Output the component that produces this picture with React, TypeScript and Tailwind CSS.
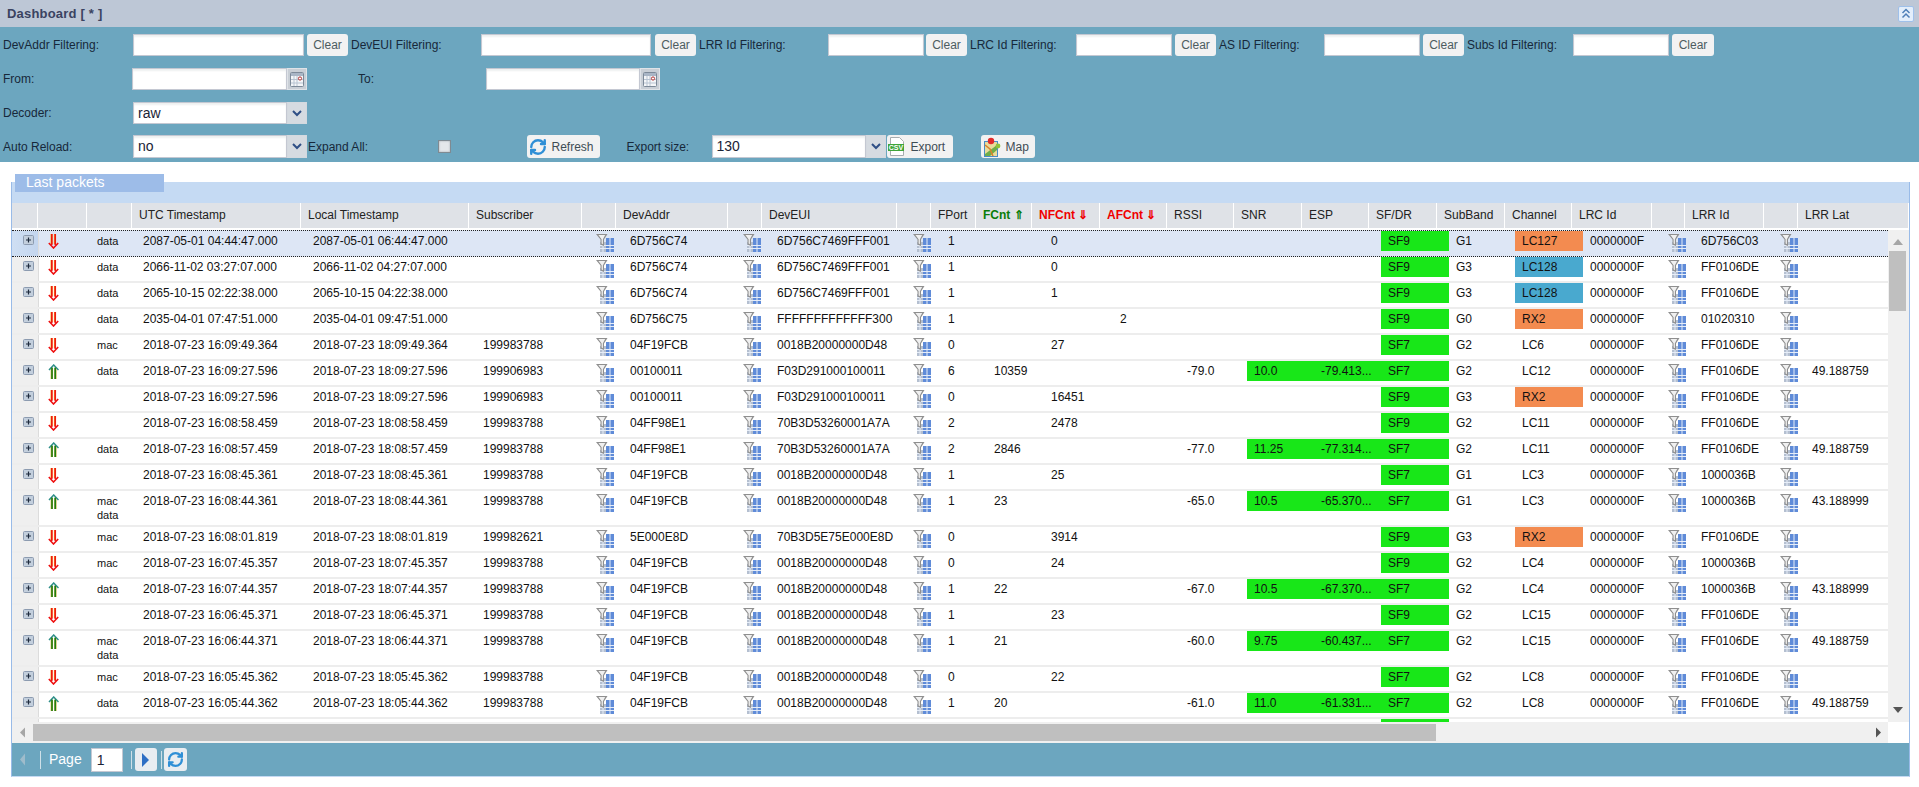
import { RefreshCw } from "lucide-react";

type Row = {
  dir: "up" | "down";
  type?: string[];
  utc?: string;
  local?: string;
  subs?: string;
  addr?: string;
  eui?: string;
  port?: string;
  f?: string;
  nf?: string;
  af?: string;
  rssi?: string;
  snr?: string;
  esp?: string;
  sf: string;
  band?: string;
  chan?: string;
  chanBg?: "orange" | "blue";
  lrr?: string;
  lat?: string;
};

const M1 = { addr: "6D756C74", eui: "6D756C7469FFF001" };
const A = { subs: "199983788", addr: "04F19FCB", eui: "0018B20000000D48" };
const B = { subs: "199906983", addr: "00100011", eui: "F03D291000100011" };
const C = { subs: "199983788", addr: "04FF98E1", eui: "70B3D53260001A7A" };
const GW1 = "FF0106DE";
const GW2 = "1000036B";

const rows: Row[] = [
  { dir: "down", type: ["data"], utc: "2087-05-01 04:44:47.000", local: "2087-05-01 06:44:47.000", ...M1, port: "1", nf: "0", sf: "SF9", band: "G1", chan: "LC127", chanBg: "orange", lrr: "6D756C03" },
  { dir: "down", type: ["data"], utc: "2066-11-02 03:27:07.000", local: "2066-11-02 04:27:07.000", ...M1, port: "1", nf: "0", sf: "SF9", band: "G3", chan: "LC128", chanBg: "blue", lrr: GW1 },
  { dir: "down", type: ["data"], utc: "2065-10-15 02:22:38.000", local: "2065-10-15 04:22:38.000", ...M1, port: "1", nf: "1", sf: "SF9", band: "G3", chan: "LC128", chanBg: "blue", lrr: GW1 },
  { dir: "down", type: ["data"], utc: "2035-04-01 07:47:51.000", local: "2035-04-01 09:47:51.000", addr: "6D756C75", eui: "FFFFFFFFFFFFF300", port: "1", af: "2", sf: "SF9", band: "G0", chan: "RX2", chanBg: "orange", lrr: "01020310" },
  { dir: "down", type: ["mac"], utc: "2018-07-23 16:09:49.364", local: "2018-07-23 18:09:49.364", ...A, port: "0", nf: "27", sf: "SF7", band: "G2", chan: "LC6", lrr: GW1 },
  { dir: "up", type: ["data"], utc: "2018-07-23 16:09:27.596", local: "2018-07-23 18:09:27.596", ...B, port: "6", f: "10359", rssi: "-79.0", snr: "10.0", esp: "-79.413...", sf: "SF7", band: "G2", chan: "LC12", lrr: GW1, lat: "49.188759" },
  { dir: "down", utc: "2018-07-23 16:09:27.596", local: "2018-07-23 18:09:27.596", ...B, port: "0", nf: "16451", sf: "SF9", band: "G3", chan: "RX2", chanBg: "orange", lrr: GW1 },
  { dir: "down", utc: "2018-07-23 16:08:58.459", local: "2018-07-23 18:08:58.459", ...C, port: "2", nf: "2478", sf: "SF9", band: "G2", chan: "LC11", lrr: GW1 },
  { dir: "up", type: ["data"], utc: "2018-07-23 16:08:57.459", local: "2018-07-23 18:08:57.459", ...C, port: "2", f: "2846", rssi: "-77.0", snr: "11.25", esp: "-77.314...", sf: "SF7", band: "G2", chan: "LC11", lrr: GW1, lat: "49.188759" },
  { dir: "down", utc: "2018-07-23 16:08:45.361", local: "2018-07-23 18:08:45.361", ...A, port: "1", nf: "25", sf: "SF7", band: "G1", chan: "LC3", lrr: GW2 },
  { dir: "up", type: ["mac", "data"], utc: "2018-07-23 16:08:44.361", local: "2018-07-23 18:08:44.361", ...A, port: "1", f: "23", rssi: "-65.0", snr: "10.5", esp: "-65.370...", sf: "SF7", band: "G1", chan: "LC3", lrr: GW2, lat: "43.188999" },
  { dir: "down", type: ["mac"], utc: "2018-07-23 16:08:01.819", local: "2018-07-23 18:08:01.819", subs: "199982621", addr: "5E000E8D", eui: "70B3D5E75E000E8D", port: "0", nf: "3914", sf: "SF9", band: "G3", chan: "RX2", chanBg: "orange", lrr: GW1 },
  { dir: "down", type: ["mac"], utc: "2018-07-23 16:07:45.357", local: "2018-07-23 18:07:45.357", ...A, port: "0", nf: "24", sf: "SF9", band: "G2", chan: "LC4", lrr: GW2 },
  { dir: "up", type: ["data"], utc: "2018-07-23 16:07:44.357", local: "2018-07-23 18:07:44.357", ...A, port: "1", f: "22", rssi: "-67.0", snr: "10.5", esp: "-67.370...", sf: "SF7", band: "G2", chan: "LC4", lrr: GW2, lat: "43.188999" },
  { dir: "down", utc: "2018-07-23 16:06:45.371", local: "2018-07-23 18:06:45.371", ...A, port: "1", nf: "23", sf: "SF9", band: "G2", chan: "LC15", lrr: GW1 },
  { dir: "up", type: ["mac", "data"], utc: "2018-07-23 16:06:44.371", local: "2018-07-23 18:06:44.371", ...A, port: "1", f: "21", rssi: "-60.0", snr: "9.75", esp: "-60.437...", sf: "SF7", band: "G2", chan: "LC15", lrr: GW1, lat: "49.188759" },
  { dir: "down", type: ["mac"], utc: "2018-07-23 16:05:45.362", local: "2018-07-23 18:05:45.362", ...A, port: "0", nf: "22", sf: "SF7", band: "G2", chan: "LC8", lrr: GW1 },
  { dir: "up", type: ["data"], utc: "2018-07-23 16:05:44.362", local: "2018-07-23 18:05:44.362", ...A, port: "1", f: "20", rssi: "-61.0", snr: "11.0", esp: "-61.331...", sf: "SF7", band: "G2", chan: "LC8", lrr: GW1, lat: "49.188759" },
  { dir: "down", sf: "" },
];

const headers = ["", "", "", "UTC Timestamp", "Local Timestamp", "Subscriber", "", "DevAddr", "", "DevEUI", "", "FPort", "FCnt ⇑", "NFCnt ⇓", "AFCnt ⇓", "RSSI", "SNR", "ESP", "SF/DR", "SubBand", "Channel", "LRC Id", "", "LRR Id", "", "LRR Lat"];

function FilterIcon() {
  return (
    <svg width="18" height="18" viewBox="0 0 18 18" className="mt-[3px] ml-2 block">
      <rect x="4" y="8" width="6" height="10" fill="#b4bfd0" />
      <rect x="10" y="4" width="8" height="14" fill="#5f8bd8" />
      <path d="M4 11.5h14M4 14.5h14M7 8v10M14 4v14" stroke="#e6edf8" strokeWidth="1" />
      <path d="M0 0h11.5L8 5.5V12l-3.5-1.5V5.5z" fill="#8f8f8f" />
      <path d="M2.4 1h6.8L6.9 5.2v5L5.6 9.6V5.2z" fill="#f0f0f0" />
    </svg>
  );
}

function Arrow({ dir }: { dir: "up" | "down" }) {
  if (dir === "up") {
    return (
      <svg width="11" height="15" viewBox="0 0 11 15" className="mt-[3px] ml-[9px] block">
        <path d="M3.8 15V4M7.4 15V4" stroke="#c9a52a" strokeWidth="2.2" />
        <path d="M1 6l4.7-5L10.5 6" fill="none" stroke="#2f8f8a" strokeWidth="1.5" />
        <path d="M4 15V3.5M7.2 15V3.5" stroke="#0c7a12" strokeWidth="1.4" />
      </svg>
    );
  }
  return (
    <svg width="11" height="15" viewBox="0 0 11 15" className="mt-[3px] ml-[9px] block">
      <path d="M3.6 0v10M7 0v10" stroke="#f5a623" strokeWidth="2.2" />
      <path d="M3.8 0v11M7.2 0v11" stroke="#ee1111" strokeWidth="1.5" />
      <path d="M.8 9l4.7 5 4.7-5" fill="none" stroke="#ee1111" strokeWidth="1.6" />
    </svg>
  );
}

function PlusBox() {
  return (
    <svg width="11" height="10" viewBox="0 0 11 10" className="mt-1 ml-[11px] block">
      <rect x=".5" y=".5" width="10" height="9" rx="1" fill="#c3cfdd" stroke="#8c9bb0" />
      <path d="M5.5 2.5v5M3 5h5" stroke="#1e2b3d" strokeWidth="1.2" />
    </svg>
  );
}

function Cell({ children, bg }: { children?: React.ReactNode; bg?: string }) {
  return <div className={`h-5 truncate pl-[7px] leading-5 ${bg ?? ""}`}>{children}</div>;
}

function DataRow({ row, index }: { row: Row; index: number }) {
  const first = index === 0;
  const tall = (row.type?.length ?? 0) > 1;
  const rowClass = first
    ? "h-[27px] border-y border-dotted border-y-[#222] bg-[#dde6f5]"
    : tall
      ? "h-9 border-b-2 border-b-[#ededed] bg-white"
      : "h-[26px] border-b-2 border-b-[#ededed] bg-white";
  const chanBg = row.chanBg === "orange" ? "bg-[#f38b50]" : row.chanBg === "blue" ? "bg-[#49a9cf]" : "";
  const good = row.snr ? "bg-[#18e718]" : "";
  return (
    <div className={`grid grid-cols-[27px_51px_46px_170px_170px_112px_35px_112px_35px_135px_36px_46px_57px_69px_67px_67px_67px_67px_68px_66px_68px_77px_34px_78px_33px_83px] items-start text-[#111] ${rowClass}`}>
      <div className={`self-stretch border-r border-r-[#dcdcdc] ${first ? "bg-gradient-to-r from-[#cfdff3] to-[#c3d5ee]" : "bg-[#efefef]"}`}>
        {row.utc && <PlusBox />}
      </div>
      <div>{row.utc && <Arrow dir={row.dir} />}</div>
      <div className="pt-[3px] pl-[7px] text-[11px] leading-[14px]">
        {row.type?.map((t) => (
          <div key={t}>{t}</div>
        ))}
      </div>
      <Cell>{row.utc}</Cell>
      <Cell>{row.local}</Cell>
      <Cell>{row.subs}</Cell>
      <div>{row.utc && <FilterIcon />}</div>
      <Cell>{row.addr}</Cell>
      <div>{row.utc && <FilterIcon />}</div>
      <Cell>{row.eui}</Cell>
      <div>{row.utc && <FilterIcon />}</div>
      <Cell>{row.port}</Cell>
      <Cell>{row.f}</Cell>
      <Cell>{row.nf}</Cell>
      <Cell>{row.af}</Cell>
      <Cell>{row.rssi}</Cell>
      <Cell bg={good}>{row.snr}</Cell>
      <Cell bg={good}>{row.esp}</Cell>
      <Cell bg="bg-[#18e718]">{row.sf}</Cell>
      <Cell>{row.band}</Cell>
      <Cell bg={chanBg}>{row.chan}</Cell>
      <Cell>{row.utc && "0000000F"}</Cell>
      <div>{row.utc && <FilterIcon />}</div>
      <Cell>{row.lrr}</Cell>
      <div>{row.utc && <FilterIcon />}</div>
      <Cell>{row.lat}</Cell>
    </div>
  );
}

function TextBox({ className }: { className: string }) {
  return <div className={`h-[22px] border border-[#c4c8d2] bg-white shadow-[inset_0_2px_2px_#eef0f0] ${className}`} />;
}

function ClearBtn({ className = "" }: { className?: string }) {
  return <div className={`flex h-[22px] w-[41px] items-center justify-center rounded-[3px] bg-[#f2f2f2] text-[#4d5c60] ${className}`}>Clear</div>;
}

function Calendar() {
  return (
    <div className="flex h-[22px] w-5 items-center justify-center border border-[#dfe3e8] bg-[#c9cfd6]">
      <svg width="14" height="15" viewBox="0 0 14 15">
        <rect x=".5" y=".5" width="13" height="14" rx="1" fill="#f4f6f8" stroke="#7d8a99" />
        <rect x="1" y="1" width="12" height="3" fill="#a9b6c6" />
        <path d="M4 4v10M7 4v10M1 7.5h12M1 11h12" stroke="#b8c4d2" />
        <circle cx="10" cy="6.5" r="1.6" fill="#fff" stroke="#b03030" />
      </svg>
    </div>
  );
}

function Combo({ value, className, h = "h-[22px]" }: { value: string; className: string; h?: string }) {
  return (
    <div className={`flex ${h} ${className}`}>
      <div className="flex-1 border border-[#c4c8d2] bg-white pl-[4px] text-[14px] leading-[20px] text-[#1a2336] shadow-[inset_0_2px_2px_#eef0f0]">{value}</div>
      <div className="flex w-5 items-center justify-center border border-[#d4d9df] bg-[#d6dbe1]">
        <svg width="10" height="7" viewBox="0 0 10 7">
          <path d="M1 1l4 4 4-4" fill="none" stroke="#2f4f86" strokeWidth="2" />
        </svg>
      </div>
    </div>
  );
}

function ToolBtn({ children, className }: { children: React.ReactNode; className: string }) {
  return <div className={`flex h-[23px] items-center gap-[5px] rounded-[3px] bg-[#f2f2f2] text-[#3f4d55] ${className}`}>{children}</div>;
}

export default function App() {
  return (
    <div className="h-[787px] w-[1919px] overflow-hidden bg-white text-xs [font-family:'Liberation_Sans',sans-serif]">
      {/* Title */}
      <div className="flex h-[27px] items-center justify-between bg-[#bdc7d6] pl-[7px] pr-[5px]">
        <span className="text-[13px] font-bold tracking-[0.2px] text-[#3a4361]">Dashboard [ * ]</span>
        <div className="flex h-4 w-4 items-center justify-center rounded-[2px] border border-[#9fc0ea] bg-[#e3eefb]">
          <svg width="10" height="11" viewBox="0 0 10 11">
            <path d="M1.5 5l3.5-3.5L8.5 5M1.5 9.5L5 6l3.5 3.5" fill="none" stroke="#4f7fb8" strokeWidth="1.5" />
          </svg>
        </div>
      </div>

      {/* Filters */}
      <div className="h-[135px] bg-[#6ca6bf] pl-[3px] pt-[7px] text-[#17283a]">
        <div className="mb-3 flex h-[22px] items-center">
          <span className="w-[130px]">DevAddr Filtering:</span>
          <TextBox className="w-[171px]" />
          <ClearBtn className="mx-[3px]" />
          <span className="w-[130px]">DevEUI Filtering:</span>
          <TextBox className="w-[170px]" />
          <ClearBtn className="ml-1 mr-[3px]" />
          <span className="w-[129px]">LRR Id Filtering:</span>
          <TextBox className="w-24" />
          <ClearBtn className="ml-0.5 mr-[3px]" />
          <span className="w-[106px]">LRC Id Filtering:</span>
          <TextBox className="w-24" />
          <ClearBtn className="mx-[3px]" />
          <span className="w-[105px]">AS ID Filtering:</span>
          <TextBox className="w-24" />
          <ClearBtn className="mx-[3px]" />
          <span className="w-[106px]">Subs Id Filtering:</span>
          <TextBox className="w-24" />
          <ClearBtn className="ml-[3px] w-[42px]" />
        </div>
        <div className="mb-3 flex h-[22px] items-center">
          <span className="w-[129px]">From:</span>
          <TextBox className="w-[155px]" />
          <Calendar />
          <span className="ml-[51px] w-[128px]">To:</span>
          <TextBox className="w-[154px]" />
          <Calendar />
        </div>
        <div className="mb-[11px] flex h-[22px] items-center">
          <span className="w-[130px]">Decoder:</span>
          <Combo value="raw" className="w-[174px]" />
        </div>
        <div className="flex h-[23px] items-center">
          <span className="w-[130px]">Auto Reload:</span>
          <Combo value="no" className="w-[174px]" h="h-[23px]" />
          <span className="ml-px w-[129.5px]">Expand All:</span>
          <div className="h-[13px] w-[13px] border border-[#7f8a92] bg-[#e4e7ea] shadow-[inset_0_0_2px_#9aa3aa]" />
          <ToolBtn className="ml-[76px] w-[73px] pl-[2px]">
            <RefreshCw size={18} strokeWidth={3.2} className="text-[#2f8fd6]" />
            <span>Refresh</span>
          </ToolBtn>
          <span className="ml-[27px] w-[85px]">Export size:</span>
          <Combo value="130" className="w-[174px]" h="h-[23px]" />
          <ToolBtn className="ml-px w-[66px] gap-[6px]">
            <svg width="18" height="19" viewBox="0 0 18 19">
              <path d="M3.5.5h9l4 4v14h-13z" fill="#fff" stroke="#a8adb0" />
              <rect x="1" y="7" width="16" height="7" fill="#3fa53a" />
              <text x="9" y="13" textAnchor="middle" fontSize="7" fontWeight="700" fill="#fff" fontFamily="Liberation Sans">CSV</text>
            </svg>
            <span>Export</span>
          </ToolBtn>
          <ToolBtn className="ml-7 w-[54px] pl-[2px]">
            <svg width="18" height="20" viewBox="0 0 18 20">
              <rect x="1.5" y="4.5" width="13" height="15" fill="#e9dc9b" stroke="#4a8cc7" />
              <path d="M2 17l12-9v5l-7 6H2z" fill="#6fae4a" />
              <path d="M2 8l5 4 3 7" fill="none" stroke="#d9822b" strokeWidth="1.5" />
              <circle cx="8" cy="4" r="3.2" fill="#e02b2b" />
              <circle cx="15" cy="9" r="2.4" fill="#8fc43a" />
            </svg>
            <span>Map</span>
          </ToolBtn>
        </div>
      </div>

      {/* Packets panel */}
      <div className="relative ml-[11px] mt-5 w-[1899px] border-x border-x-[#99bbe8] border-b border-b-[#c5daf3]">
        <div className="absolute -top-2 left-[3px] h-[18px] w-[149px] bg-[#9dbce8] pl-[11px] text-[14px] leading-4 text-white">Last packets</div>
        <div className="h-[21px] bg-[#c5daf3]" />

        <div className="grid h-[27px] grid-cols-[26px_49px_45px_169px_168px_113px_34px_112px_34px_135px_34px_45px_56px_68px_67px_67px_68px_67px_68px_68px_67px_80px_33px_79px_34px_1fr] border-b-2 border-b-white bg-[#dfe2e7] text-[#222]">
          {headers.map((h, i) => {
            let tone = "";
            if (h.startsWith("FCnt")) tone = "font-bold text-[#0a7d0a]";
            if (h.startsWith("NFCnt") || h.startsWith("AFCnt")) tone = "font-bold text-[#f00000]";
            return (
              <div key={i} className={`truncate border-r border-r-white pl-[7px] leading-[25px] ${tone}`}>
                {h}
              </div>
            );
          })}
        </div>

        <div className="flex h-[492px]">
          <div className="w-[1876px] overflow-hidden">
            {rows.map((row, i) => (
              <DataRow key={i} row={row} index={i} />
            ))}
          </div>
          <div className="relative w-[21px] bg-[#f0f0f0]">
            <svg width="12" height="8" viewBox="0 0 12 8" className="absolute left-1 top-2">
              <path d="M6 1l5 6H1z" fill="#a6a6a6" />
            </svg>
            <div className="absolute left-px top-[21px] h-[60px] w-[17px] bg-[#bfbfbf]" />
            <svg width="12" height="8" viewBox="0 0 12 8" className="absolute bottom-2 left-1">
              <path d="M1 1h10L6 7z" fill="#555" />
            </svg>
          </div>
        </div>

        {/* Horizontal scrollbar */}
        <div className="flex h-[21px]">
          <div className="flex w-[1876px] items-center bg-[#f0f0f0]">
            <div className="flex w-[21px] justify-center">
              <svg width="7" height="11" viewBox="0 0 7 11">
                <path d="M6 .5v10L1 5.5z" fill="#a6a6a6" />
              </svg>
            </div>
            <div className="h-[17px] w-[1403px] bg-[#bfbfbf]" />
            <div className="flex flex-1 justify-end pr-[6px]">
              <svg width="7" height="11" viewBox="0 0 7 11">
                <path d="M1 .5v10l5-5z" fill="#555" />
              </svg>
            </div>
          </div>
        </div>

        {/* Paging */}
        <div className="flex h-[33px] items-center bg-[#6ca6bf] text-[14px] text-white">
          <svg width="7" height="13" viewBox="0 0 7 13" className="ml-[7px]">
            <path d="M6 .5v12L1 6.5z" fill="#9fbccb" />
          </svg>
          <div className="ml-[14px] h-[18px] w-px bg-[#cfe0e8]" />
          <span className="ml-2">Page</span>
          <div className="ml-[9px] h-6 w-8 border border-[#c4c8d2] bg-white pl-[5px] leading-[22px] text-[#1a2336]">1</div>
          <div className="ml-2 h-[18px] w-px bg-[#cfe0e8]" />
          <div className="ml-[3px] flex h-[23px] w-[22px] items-center justify-center rounded-[3px] bg-[#e9edf1]">
            <svg width="9" height="14" viewBox="0 0 9 14">
              <path d="M1 0v14l7-7z" fill="#2f6fc4" />
            </svg>
          </div>
          <div className="ml-1 h-[18px] w-px bg-[#cfe0e8]" />
          <div className="ml-[2px] flex h-[23px] w-[23px] items-center justify-center rounded-[3px] bg-[#e9edf1]">
            <RefreshCw size={17} strokeWidth={3.2} className="text-[#2f8fd6]" />
          </div>
        </div>
      </div>
    </div>
  );
}
